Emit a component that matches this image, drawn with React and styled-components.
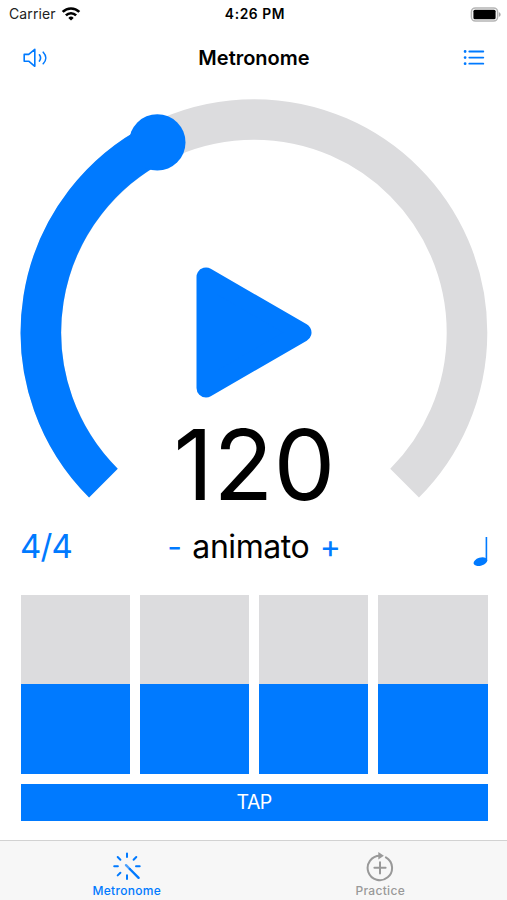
import React from "react";
import styled, { createGlobalStyle } from "styled-components";

const BLUE = "#007aff";
const TRACK = "#dcdcde";

const GlobalStyle = createGlobalStyle`
  * { box-sizing: border-box; }
  body { margin: 0; background: #fff; }
  button { appearance: none; border: 0; padding: 0; margin: 0; background: none; font: inherit; color: inherit; }
  svg { display: block; }
`;

const Screen = styled.div`
  width: 507px;
  height: 900px;
  display: flex;
  flex-direction: column;
  overflow: hidden;
  background: #fff;
  color: #000;
  font-family: Inter, "Liberation Sans", sans-serif;
`;

const StatusBar = styled.header`
  height: 28px;
  flex: none;
  display: grid;
  grid-template-columns: 1fr auto 1fr;
  align-items: center;
  padding: 0 6px 0 9px;
`;

const Carrier = styled.div`
  display: flex;
  align-items: center;
  gap: 5px;
  font-size: 14px;
  line-height: 28px;
  letter-spacing: 0.1px;
  color: #222;
`;

const Clock = styled.div`
  font-size: 13.8px;
  font-weight: 600;
  line-height: 28px;
  letter-spacing: 0.6px;
`;

const BatterySlot = styled.div`
  justify-self: end;
`;

const NavBar = styled.nav`
  height: 60px;
  flex: none;
  display: grid;
  grid-template-columns: 1fr auto 1fr;
  align-items: center;
  padding: 0 22px 0 23px;
  color: ${BLUE};
`;

const Title = styled.h1`
  margin: 0;
  font-size: 20px;
  font-weight: 600;
  line-height: 24px;
  letter-spacing: 0;
  color: #000;
`;

const IconButton = styled.button`
  justify-self: ${({ $end }) => ($end ? "end" : "start")};
`;

const Dial = styled.section`
  height: 440px;
  flex: none;
  display: grid;
  grid-template-rows: 320px 120px;
  position: relative;
`;

const Ring = styled.svg`
  position: absolute;
  inset: 0;
`;

const PlayButton = styled.button`
  position: relative;
  align-self: end;
  justify-self: center;
  margin-bottom: 10px;
`;

const Tempo = styled.div`
  position: relative;
  padding-left: 2px;
  text-align: center;
  font-size: 98px;
  line-height: 114px;
  letter-spacing: 0.2px;
`;

const Settings = styled.section`
  height: 67px;
  flex: none;
  display: grid;
  grid-template-columns: 1fr auto 1fr;
  padding: 0 19px 0 20px;
  font-size: 33px;
  line-height: 36px;
`;

const Signature = styled.button`
  justify-self: start;
  align-self: start;
  color: ${BLUE};
  letter-spacing: -0.9px;
`;

const TempoName = styled.div`
  display: flex;
  gap: 10.5px;
  align-self: start;
  font-size: 32px;
  line-height: 38px;
  letter-spacing: -0.45px;
`;

const Step = styled.button`
  color: ${BLUE};
`;

const NoteButton = styled.button`
  justify-self: end;
  align-self: start;
  margin-top: 9px;
`;

const Beats = styled.section`
  height: 179px;
  flex: none;
  display: grid;
  grid-template-columns: repeat(4, 1fr);
  gap: 9.6px;
  margin: 0 19.4px 0 20.6px;
`;

const Beat = styled.div`
  background: linear-gradient(to top, ${BLUE} ${({ $level }) => $level}%, ${TRACK} ${({ $level }) => $level}%);
`;

const TapButton = styled.button`
  && {
    height: 37px;
    flex: none;
    margin: 9.6px 19.4px 0 20.6px;
    background: ${BLUE};
    color: #fff;
    font-size: 19.5px;
    font-weight: 400;
    line-height: 37px;
    letter-spacing: -0.6px;
  }
`;

const TabBar = styled.footer`
  margin-top: auto;
  height: 60px;
  flex: none;
  display: grid;
  grid-template-columns: 1fr 1fr;
  background: #f7f7f7;
  border-top: 1px solid #d2d2d2;
`;

const Tab = styled.button`
  display: flex;
  flex-direction: column;
  align-items: center;
  gap: 1px;
  padding-top: 11px;
  color: ${({ $active }) => ($active ? BLUE : "#999")};
  font-size: 12px;
  font-weight: 500;
  line-height: 15px;
  letter-spacing: 0.3px;
`;

const WifiIcon = () => (
  <svg width="20" height="16" viewBox="0 0 20 16" fill="none" stroke="#000" strokeWidth="2.6">
    <path d="M1.7 5.9a11.7 11.7 0 0 1 16.6 0" />
    <path d="M4.9 9.3a7.2 7.2 0 0 1 10.2 0" />
    <path d="M10 14.6 7.3 11.9a3.8 3.8 0 0 1 5.4 0Z" fill="#000" stroke="none" />
  </svg>
);

const BatteryIcon = () => (
  <svg width="31" height="15" viewBox="0 0 31 15">
    <rect x="1.4" y="0.9" width="26.2" height="13.2" rx="4" fill="#fff" stroke="#b5b5b5" strokeWidth="1.5" />
    <rect x="3.4" y="2.7" width="22.2" height="9.6" rx="1.5" fill="#000" />
    <path d="M28.9 5.2c2.3.7 2.3 3.9 0 4.6Z" fill="#a8a8a8" />
  </svg>
);

const SpeakerIcon = () => (
  <svg width="26" height="20" viewBox="0 0 26 20" fill="none" stroke={BLUE} strokeWidth="1.6" strokeLinecap="round" strokeLinejoin="round">
    <path d="M1.2 6.4h4.5L11.8 1.3v17l-6.1-5.1H1.2Z" />
    <path d="M16.4 6.8c1.5 2 1.5 4.3 0 6.3" />
    <path d="M20.2 4.2c3.4 3.5 3.4 8 0 11.5" />
  </svg>
);

const ListIcon = () => (
  <svg width="22" height="16" viewBox="0 0 22 16" stroke={BLUE} strokeLinecap="round">
    <path d="M6.3 1.5h14M6.3 7.6h14M6.3 13.7h14" strokeWidth="1.8" />
    <path d="M2.1 1.5h.01M2.1 7.6h.01M2.1 13.7h.01" strokeWidth="2.8" />
  </svg>
);

const DialRing = () => (
  <Ring width="507" height="440" viewBox="0 88 507 440" fill="none">
    <path d="M103.4 483.1A213 213 0 1 1 404.6 483.1" stroke={TRACK} strokeWidth="40.6" />
    <path d="M103.4 483.1A213 213 0 0 1 157.3 142.5" stroke={BLUE} strokeWidth="40.6" />
    <circle cx="157.3" cy="142.4" r="28.2" fill={BLUE} />
  </Ring>
);

const PlayIcon = () => (
  <svg width="116" height="131" viewBox="0 0 116 131">
    <path d="M10 10v111l96-55.5Z" fill={BLUE} stroke={BLUE} strokeWidth="19" strokeLinejoin="round" />
  </svg>
);

const NoteIcon = () => (
  <svg width="15" height="30" viewBox="0 0 15 30" fill={BLUE}>
    <rect x="12.6" y="0" width="1.6" height="24" />
    <ellipse cx="7.4" cy="24.7" rx="7" ry="4" transform="rotate(-17 7.4 24.7)" />
  </svg>
);

const WandIcon = () => (
  <svg width="30" height="30" viewBox="0 0.8 30 30" fill="none" stroke={BLUE} strokeWidth="2" strokeLinecap="round">
    <path d="M15 2.2v3.7M15 24v3.7M2.2 15h3.7M24 15h3.7M5.7 5.8l2.7 2.7M24.3 5.8l-2.7 2.7M5.7 24.2l2.7-2.7" />
    <path d="M14 14l3.8 3.8" strokeWidth="2.4" opacity="0.7" />
    <path d="M17.8 17.8l8.8 8.8" strokeWidth="2.4" />
  </svg>
);

const PracticeIcon = () => (
  <svg width="30" height="30" viewBox="0 0 30 30" fill="none" stroke="#999" strokeWidth="2" strokeLinecap="round">
    <path d="M20.9 5.4A12.2 12.2 0 1 1 15 3.8" />
    <path d="M15 10.2v11.2M9.4 15.8h11.2" />
    <path d="M13.3 0 18.9 3.8 13.3 7.6Z" fill="#999" stroke="none" />
  </svg>
);

export default function App() {
  return (
    <Screen>
      <GlobalStyle />
      <StatusBar>
        <Carrier>Carrier <WifiIcon /></Carrier>
        <Clock>4:26 PM</Clock>
        <BatterySlot><BatteryIcon /></BatterySlot>
      </StatusBar>
      <NavBar>
        <IconButton aria-label="Sound"><SpeakerIcon /></IconButton>
        <Title>Metronome</Title>
        <IconButton $end aria-label="List"><ListIcon /></IconButton>
      </NavBar>
      <Dial>
        <DialRing />
        <PlayButton aria-label="Play"><PlayIcon /></PlayButton>
        <Tempo>120</Tempo>
      </Dial>
      <Settings>
        <Signature>4/4</Signature>
        <TempoName>
          <Step>-</Step>
          <span>animato</span>
          <Step>+</Step>
        </TempoName>
        <NoteButton aria-label="Quarter note"><NoteIcon /></NoteButton>
      </Settings>
      <Beats>
        {[50, 50, 50, 50].map((level, i) => <Beat key={i} $level={level} />)}
      </Beats>
      <TapButton>TAP</TapButton>
      <TabBar>
        <Tab $active><WandIcon />Metronome</Tab>
        <Tab><PracticeIcon />Practice</Tab>
      </TabBar>
    </Screen>
  );
}
